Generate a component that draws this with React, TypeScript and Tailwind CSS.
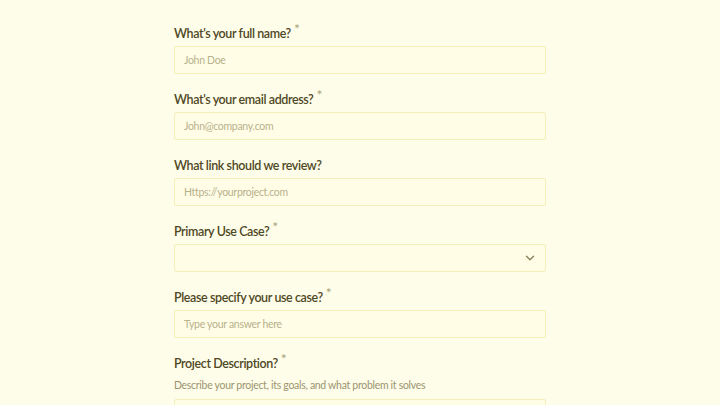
import React from "react";

const font = { fontFamily: "Lato, 'Noto Sans', sans-serif" };

function Label({ text, required }: { text: string; required?: boolean }) {
  return (
    <div className="flex items-start h-[20px] pt-[1px] text-[12.5px] tracking-[-0.4px] font-semibold text-[#4f4825] leading-[20px]">
      <span>{text}</span>
      {required && <span className="ml-[3px] text-[14px] font-normal leading-[12px] text-[#aaa47e] -mt-[1px]">*</span>}
    </div>
  );
}

function Field({ label, placeholder, required }: { label: string; placeholder: string; required?: boolean }) {
  return (
    <div className="flex flex-col gap-[3px]">
      <Label text={label} required={required} />
      <div className="h-[28px] border border-[#f3efb8] bg-[#fffde6] rounded-[2px] flex items-center px-[9px] pt-[1px] text-[10.5px] tracking-[-0.3px] text-[#b8b18c]">
        {placeholder}
      </div>
    </div>
  );
}

export default function App() {
  return (
    <div className="w-[720px] h-[405px] overflow-hidden bg-[#fefde9]" style={font}>
      <div className="w-[372px] ml-[174px] pt-[23px] flex flex-col gap-[15px]">
        <Field label="What's your full name?" placeholder="John Doe" required />
        <Field label="What's your email address?" placeholder="John@company.com" required />
        <Field label="What link should we review?" placeholder="Https://yourproject.com" />
        <div className="flex flex-col gap-[3px]">
          <Label text="Primary Use Case?" required />
          <div className="h-[28px] border border-[#f3efb8] bg-[#fffde6] rounded-[2px] flex items-center justify-end pr-[8px]">
            <svg width="14" height="14" viewBox="0 0 24 24" fill="none" stroke="#857e58" strokeWidth="2.2" strokeLinecap="round" strokeLinejoin="round">
              <path d="M6 9l6 6 6-6" />
            </svg>
          </div>
        </div>
        <Field label="Please specify your use case?" placeholder="Type your answer here" required />
        <div className="flex flex-col gap-[3px]">
          <Label text="Project Description?" required />
          <div className="text-[10.5px] tracking-[-0.3px] text-[#9c9470] mt-[2px] mb-[2px]">Describe your project, its goals, and what problem it solves</div>
          <div className="h-[60px] border border-[#f3efb8] bg-[#fffde6] rounded-[2px]" />
        </div>
      </div>
    </div>
  );
}
